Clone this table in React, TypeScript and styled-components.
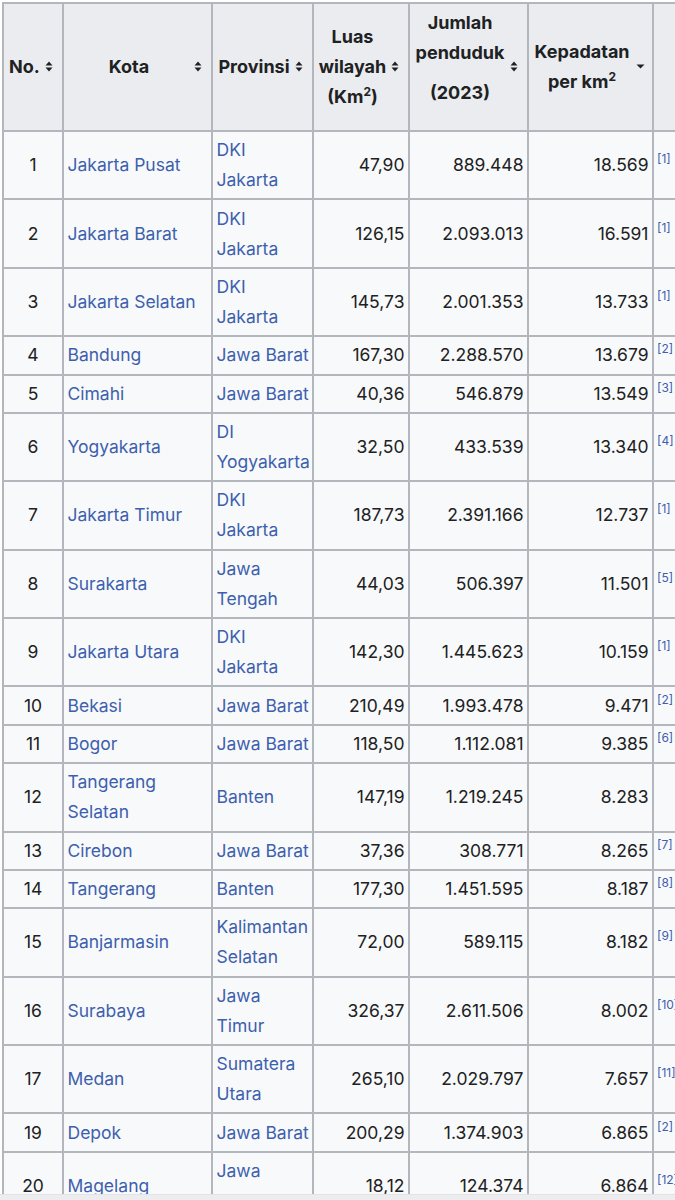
import React from "react";
import styled, { createGlobalStyle } from "styled-components";

const GlobalStyle = createGlobalStyle`
  html, body {
    margin: 0;
    padding: 0;
    background: #ffffff;
  }
  body {
    font-family: Inter, "Noto Sans", "Liberation Sans", sans-serif;
    color: #202122;
  }
`;

const Page = styled.div`
  width: 675px;
  height: 1200px;
  display: flex;
  flex-direction: column;
  overflow: hidden;
`;

const Scroller = styled.div`
  flex: 1;
  overflow: hidden;
  padding: 2px 0 0 2px;
`;

const BottomBar = styled.div`
  height: 5px;
  background: #ededef;
  border-top: 1px solid #e2e3e6;
`;

const Table = styled.table`
  border-collapse: collapse;
  table-layout: fixed;
  width: 697px;
  font-size: 17.5px;
  line-height: 30px;
  background: #f8f9fa;
  border: 2px solid #b3b7bd;
`;

const HeadRow = styled.tr`
  height: 128px;
`;

const Th = styled.th<{ $top?: boolean }>`
  position: relative;
  background: #eaecf0;
  border: 2px solid #b3b7bd;
  padding: 4px 21px 4px 4px;
  font-weight: 700;
  font-size: 18px;
  text-align: center;
  vertical-align: ${(p) => (p.$top ? "top" : "middle")};
  line-height: 30px;
`;

const RefTh = styled.th`
  background: #eaecf0;
  border: 2px solid #b3b7bd;
  padding: 0;
`;

const SortIcon = styled.span<{ $right?: number }>`
  position: absolute;
  right: ${(p) => p.$right ?? 9}px;
  top: 50%;
  width: 9px;
  height: 10px;
  margin-top: -6px;
  display: flex;
  align-items: center;
  justify-content: center;
`;

const Sup = styled.sup`
  font-size: 12px;
  line-height: 1;
  vertical-align: 7px;
`;

const Gap = styled.div`
  margin-top: 10px;
`;

const Td = styled.td<{ $align?: "left" | "center" | "right" }>`
  border: 2px solid #b3b7bd;
  padding: 3.2px 3.5px 3.2px 3.5px;
  text-align: ${(p) => p.$align ?? "left"};
  vertical-align: middle;
  white-space: nowrap;
  overflow: hidden;
`;

const RefTd = styled.td`
  border: 2px solid #b3b7bd;
  padding: 3.2px 0 3.2px 3px;
  vertical-align: middle;
  white-space: nowrap;
  overflow: hidden;
`;

const Link = styled.span`
  color: #3d5fae;
`;

const Ref = styled.sup`
  color: #3d5fae;
  font-size: 12px;
  line-height: 1;
  vertical-align: 8px;
`;

const Both = () => (
  <svg width="8" height="11" viewBox="0 0 8 11">
    <path d="M4 0.5 L7.5 4.5 L0.5 4.5 Z" fill="#202122" />
    <path d="M4 10.5 L7.5 6.5 L0.5 6.5 Z" fill="#202122" />
  </svg>
);

const Down = () => (
  <svg width="9" height="10" viewBox="0 0 9 10">
    <path d="M0.5 3.5 L8.5 3.5 L4.5 7.5 Z" fill="#202122" />
  </svg>
);

type Row = {
  no: string;
  kota: string[];
  prov: string[];
  luas: string;
  pend: string;
  kep: string;
  ref?: string;
};

const rows: Row[] = [
  { no: "1", kota: ["Jakarta Pusat"], prov: ["DKI", "Jakarta"], luas: "47,90", pend: "889.448", kep: "18.569", ref: "[1]" },
  { no: "2", kota: ["Jakarta Barat"], prov: ["DKI", "Jakarta"], luas: "126,15", pend: "2.093.013", kep: "16.591", ref: "[1]" },
  { no: "3", kota: ["Jakarta Selatan"], prov: ["DKI", "Jakarta"], luas: "145,73", pend: "2.001.353", kep: "13.733", ref: "[1]" },
  { no: "4", kota: ["Bandung"], prov: ["Jawa Barat"], luas: "167,30", pend: "2.288.570", kep: "13.679", ref: "[2]" },
  { no: "5", kota: ["Cimahi"], prov: ["Jawa Barat"], luas: "40,36", pend: "546.879", kep: "13.549", ref: "[3]" },
  { no: "6", kota: ["Yogyakarta"], prov: ["DI", "Yogyakarta"], luas: "32,50", pend: "433.539", kep: "13.340", ref: "[4]" },
  { no: "7", kota: ["Jakarta Timur"], prov: ["DKI", "Jakarta"], luas: "187,73", pend: "2.391.166", kep: "12.737", ref: "[1]" },
  { no: "8", kota: ["Surakarta"], prov: ["Jawa", "Tengah"], luas: "44,03", pend: "506.397", kep: "11.501", ref: "[5]" },
  { no: "9", kota: ["Jakarta Utara"], prov: ["DKI", "Jakarta"], luas: "142,30", pend: "1.445.623", kep: "10.159", ref: "[1]" },
  { no: "10", kota: ["Bekasi"], prov: ["Jawa Barat"], luas: "210,49", pend: "1.993.478", kep: "9.471", ref: "[2]" },
  { no: "11", kota: ["Bogor"], prov: ["Jawa Barat"], luas: "118,50", pend: "1.112.081", kep: "9.385", ref: "[6]" },
  { no: "12", kota: ["Tangerang", "Selatan"], prov: ["Banten"], luas: "147,19", pend: "1.219.245", kep: "8.283" },
  { no: "13", kota: ["Cirebon"], prov: ["Jawa Barat"], luas: "37,36", pend: "308.771", kep: "8.265", ref: "[7]" },
  { no: "14", kota: ["Tangerang"], prov: ["Banten"], luas: "177,30", pend: "1.451.595", kep: "8.187", ref: "[8]" },
  { no: "15", kota: ["Banjarmasin"], prov: ["Kalimantan", "Selatan"], luas: "72,00", pend: "589.115", kep: "8.182", ref: "[9]" },
  { no: "16", kota: ["Surabaya"], prov: ["Jawa", "Timur"], luas: "326,37", pend: "2.611.506", kep: "8.002", ref: "[10]" },
  { no: "17", kota: ["Medan"], prov: ["Sumatera", "Utara"], luas: "265,10", pend: "2.029.797", kep: "7.657", ref: "[11]" },
  { no: "19", kota: ["Depok"], prov: ["Jawa Barat"], luas: "200,29", pend: "1.374.903", kep: "6.865", ref: "[2]" },
  { no: "20", kota: ["Magelang"], prov: ["Jawa", "Tengah"], luas: "18,12", pend: "124.374", kep: "6.864", ref: "[12]" },
];

const Lines = ({ lines }: { lines: string[] }) => (
  <>
    {lines.map((l, i) => (
      <React.Fragment key={i}>
        {i > 0 && <br />}
        {l}
      </React.Fragment>
    ))}
  </>
);

export default function App() {
  return (
    <>
      <GlobalStyle />
      <Page>
        <Scroller>
          <Table>
            <colgroup>
              <col style={{ width: 60 }} />
              <col style={{ width: 149 }} />
              <col style={{ width: 101 }} />
              <col style={{ width: 96 }} />
              <col style={{ width: 119 }} />
              <col style={{ width: 125 }} />
              <col style={{ width: 47 }} />
            </colgroup>
            <thead>
              <HeadRow>
                <Th>
                  No.
                  <SortIcon><Both /></SortIcon>
                </Th>
                <Th>
                  Kota
                  <SortIcon><Both /></SortIcon>
                </Th>
                <Th>
                  Provinsi
                  <SortIcon><Both /></SortIcon>
                </Th>
                <Th>
                  Luas
                  <br />
                  wilayah
                  <br />
                  (Km<Sup>2</Sup>)
                  <SortIcon><Both /></SortIcon>
                </Th>
                <Th $top>
                  Jumlah
                  <br />
                  penduduk
                  <Gap>(2023)</Gap>
                  <SortIcon><Both /></SortIcon>
                </Th>
                <Th>
                  Kepadatan
                  <br />
                  per km<Sup>2</Sup>
                  <SortIcon $right={7}><Down /></SortIcon>
                </Th>
                <RefTh />
              </HeadRow>
            </thead>
            <tbody>
              {rows.map((r) => (
                <tr key={r.no}>
                  <Td $align="center">{r.no}</Td>
                  <Td>
                    <Link><Lines lines={r.kota} /></Link>
                  </Td>
                  <Td>
                    <Link><Lines lines={r.prov} /></Link>
                  </Td>
                  <Td $align="right">{r.luas}</Td>
                  <Td $align="right">{r.pend}</Td>
                  <Td $align="right">{r.kep}</Td>
                  <RefTd>{r.ref && <Ref>{r.ref}</Ref>}</RefTd>
                </tr>
              ))}
            </tbody>
          </Table>
        </Scroller>
        <BottomBar />
      </Page>
    </>
  );
}
